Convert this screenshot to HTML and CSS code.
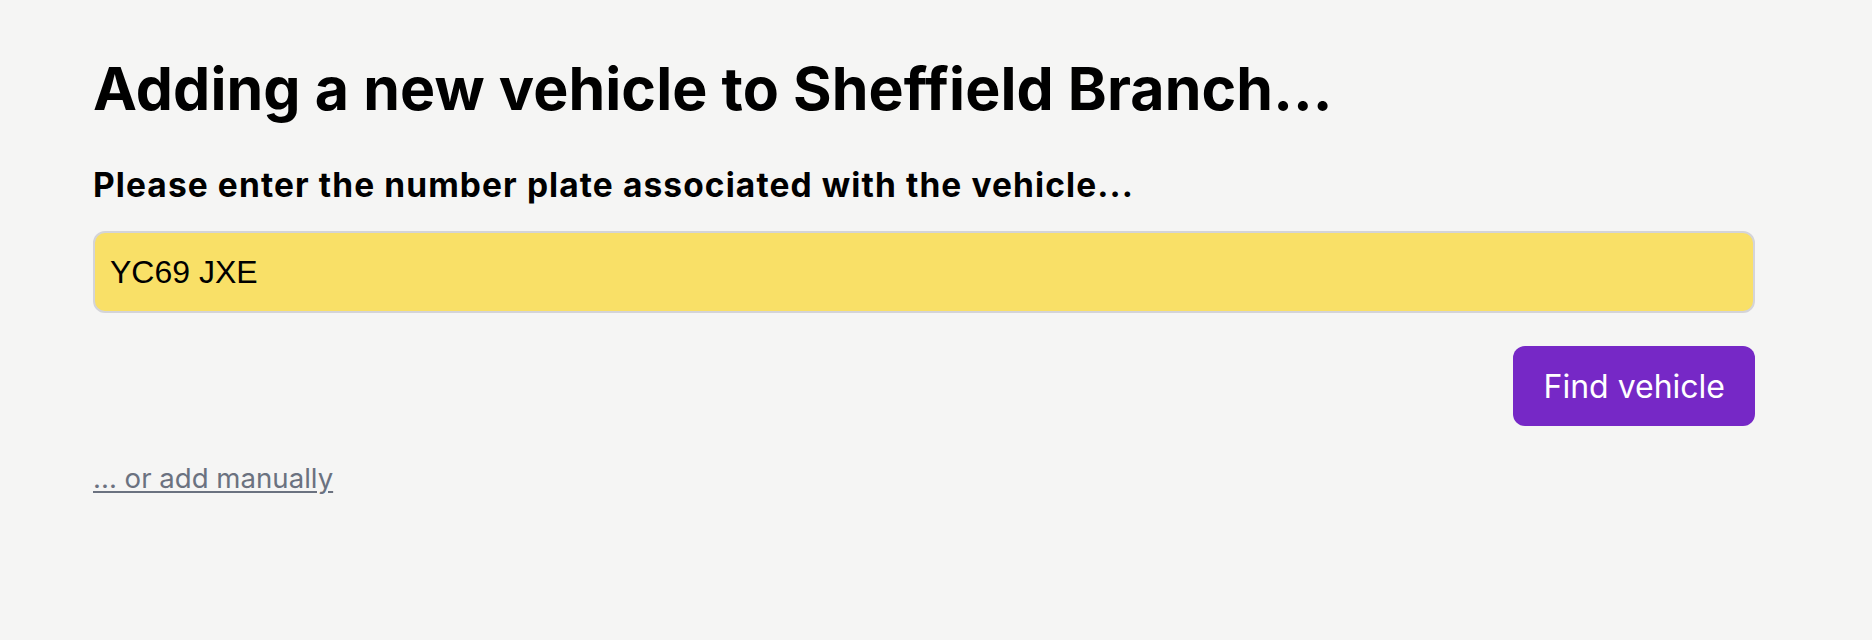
FILE: index.html
```html
<!DOCTYPE html>
<html lang="en">
<head>
<meta charset="utf-8">
<title>Add vehicle</title>
<link rel="stylesheet" href="styles.css">
</head>
<body>
<main class="page">
  <h1 class="title">Adding a new vehicle to Sheffield Branch...</h1>
  <form class="form">
    <label class="label" for="plate">Please enter the number plate associated with the vehicle...</label>
    <input class="plate" id="plate" type="text" value="YC69 JXE">
    <div class="actions">
      <button class="btn" type="button">Find vehicle</button>
    </div>
  </form>
  <a class="manual" href="#">... or add manually</a>
</main>
</body>
</html>
```
FILE: styles.css
```css
html, body {
  margin: 0;
  padding: 0;
  background: #f5f5f4;
}
body {
  font-family: Inter, "Noto Sans", sans-serif;
  color: #000;
}
.page {
  width: 1662px;
  padding: 54px 0 0 93px;
  display: flex;
  flex-direction: column;
  align-items: flex-start;
}
.title {
  margin: 0;
  font-size: 59px;
  line-height: 70px;
  font-weight: 700;
  letter-spacing: 0.1px;
}
.form {
  width: 100%;
  display: flex;
  flex-direction: column;
  margin-top: 41px;
}
.label {
  font-size: 33.5px;
  line-height: 40px;
  font-weight: 700;
  letter-spacing: 1.1px;
}
.plate {
  margin-top: 26px;
  box-sizing: border-box;
  width: 100%;
  height: 82px;
  border: 2px solid #d4d4d8;
  border-radius: 12px;
  background: #f9e067;
  padding: 0 15px;
  font-family: "Liberation Sans", Arial, sans-serif;
  font-size: 32px;
  color: #000;
  outline: none;
}
.actions {
  display: flex;
  justify-content: flex-end;
  margin-top: 33px;
}
.btn {
  box-sizing: border-box;
  height: 80px;
  padding: 0 30px;
  border: none;
  border-radius: 12px;
  background: #7628c6;
  color: #fff;
  font-family: Inter, sans-serif;
  font-size: 32px;
  font-weight: 400;
}
.manual {
  margin-top: 32px;
  font-size: 27.6px;
  line-height: 40px;
  color: #6b7280;
  text-decoration: underline;
  text-underline-offset: 3px;
}
```
